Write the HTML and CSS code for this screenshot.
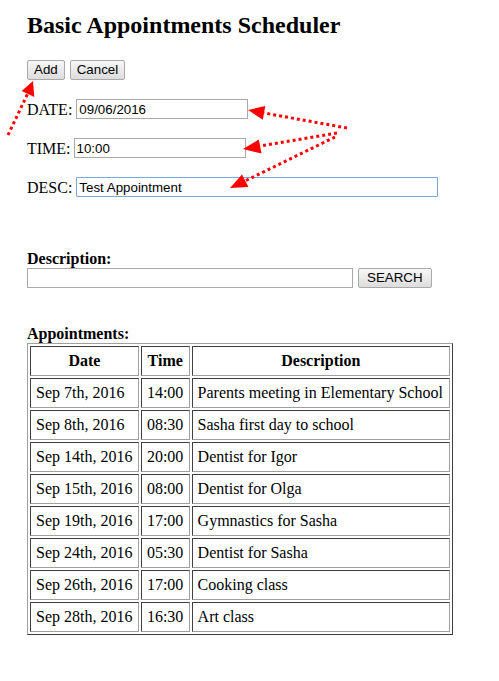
FILE: index.html
```html
<!DOCTYPE html>
<html>
<head>
<meta charset="utf-8">
<title>Basic Appointments Scheduler</title>
<link rel="stylesheet" href="styles.css">
</head>
<body>
<div class="page">
  <h1 class="title">Basic Appointments Scheduler</h1>
  <div class="actions">
    <button class="btn">Add</button>
    <button class="btn">Cancel</button>
  </div>
  <div class="field">
    <label class="field-label">DATE:</label>
    <input class="text-input short" type="text" value="09/06/2016">
  </div>
  <div class="field">
    <label class="field-label">TIME:</label>
    <input class="text-input short" type="text" value="10:00">
  </div>
  <div class="field">
    <label class="field-label">DESC:</label>
    <input class="text-input long focused" type="text" value="Test Appointment">
  </div>

  <div class="search-block">
    <div class="section-label">Description:</div>
    <div class="search-row">
      <input class="text-input search-input" type="text" value="">
      <button class="btn search-btn">SEARCH</button>
    </div>
  </div>

  <div class="appointments">
    <div class="section-label">Appointments:</div>
    <table class="appt-table">
      <thead>
        <tr><th>Date</th><th>Time</th><th>Description</th></tr>
      </thead>
      <tbody>
        <tr><td>Sep 7th, 2016</td><td>14:00</td><td>Parents meeting in Elementary School</td></tr>
        <tr><td>Sep 8th, 2016</td><td>08:30</td><td>Sasha first day to school</td></tr>
        <tr><td>Sep 14th, 2016</td><td>20:00</td><td>Dentist for Igor</td></tr>
        <tr><td>Sep 15th, 2016</td><td>08:00</td><td>Dentist for Olga</td></tr>
        <tr><td>Sep 19th, 2016</td><td>17:00</td><td>Gymnastics for Sasha</td></tr>
        <tr><td>Sep 24th, 2016</td><td>05:30</td><td>Dentist for Sasha</td></tr>
        <tr><td>Sep 26th, 2016</td><td>17:00</td><td>Cooking class</td></tr>
        <tr><td>Sep 28th, 2016</td><td>16:30</td><td>Art class</td></tr>
      </tbody>
    </table>
  </div>
</div>

<svg class="annotations" width="499" height="681" viewBox="0 0 499 681" xmlns="http://www.w3.org/2000/svg">
  <g stroke="#ff0000" stroke-width="3" stroke-dasharray="3 3" fill="none">
    <line x1="8" y1="135" x2="27.5" y2="94"/>
    <line x1="347" y1="128" x2="264" y2="113"/>
    <line x1="337" y1="133" x2="260" y2="146"/>
    <line x1="335" y1="137" x2="245" y2="181"/>
  </g>
  <g fill="#ff0000">
    <polygon points="33,81 34.3,97 21.7,91"/>
    <polygon points="248,110 265.3,106 262.8,119.8"/>
    <polygon points="243,149 261.5,153.5 258.8,139.6"/>
    <polygon points="230,188 248.5,187 242,174.5"/>
  </g>
</svg>
</body>
</html>
```

FILE: styles.css
```css
html, body {
  margin: 0;
  padding: 0;
  background: #ffffff;
}

body {
  font-family: "Liberation Serif", "Times New Roman", serif;
  font-size: 16px;
  color: #000000;
  position: relative;
}

.page {
  padding: 12px 0 40px 27px;
}

.title {
  margin: 0;
  font-size: 24px;
  font-weight: bold;
  line-height: 27px;
}

.actions {
  display: flex;
  gap: 5px;
  margin-top: 21px;
  height: 20px;
}

.btn {
  font-family: "Liberation Sans", Arial, sans-serif;
  font-size: 13.33px;
  color: #000000;
  height: 20px;
  padding: 0 6px;
  margin: 0;
  border: 1px solid #a9a9a9;
  border-radius: 2px;
  background: linear-gradient(#f7f7f7, #dddddd);
  line-height: 16px;
}

.field {
  display: flex;
  align-items: center;
  gap: 4px;
  margin-top: 19px;
  height: 20px;
}

.field-label {
  line-height: 18px;
  padding-top: 1px;
}

.text-input {
  font-family: "Liberation Sans", Arial, sans-serif;
  font-size: 13.33px;
  color: #000000;
  height: 20px;
  box-sizing: border-box;
  padding: 1px 2px;
  margin: 0;
  border: 1px solid #a9a9a9;
  background: #ffffff;
  outline: none;
}

.short {
  width: 172px;
}

.field:nth-child(4) .short {
  width: 172px;
  margin-left: -1px;
}

.long {
  width: 362px;
}

.focused {
  border-color: #7ea6dc;
  border-radius: 1px;
}

.search-block {
  margin-top: 53px;
}

.section-label {
  font-weight: bold;
  line-height: 18px;
}

.search-row {
  display: flex;
  gap: 5px;
  height: 20px;
}

.search-input {
  width: 326px;
}

.search-btn {
  padding: 0 8px;
}

.appointments {
  margin-top: 37px;
}

.appt-table {
  width: 426px;
  border-collapse: separate;
  border-spacing: 2px;
  border: 1px solid;
  border-color: #a0a0a0 #404040 #404040 #a0a0a0;
}

.appt-table th,
.appt-table td {
  border: 1px solid;
  border-color: #404040 #a0a0a0 #a0a0a0 #404040;
  padding: 5px 5px;
  line-height: 18px;
  font-size: 16px;
  white-space: nowrap;
}

.appt-table th {
  font-weight: bold;
  text-align: center;
}

.appt-table td {
  text-align: left;
}

.annotations {
  position: absolute;
  left: 0;
  top: 0;
  pointer-events: none;
}
```
